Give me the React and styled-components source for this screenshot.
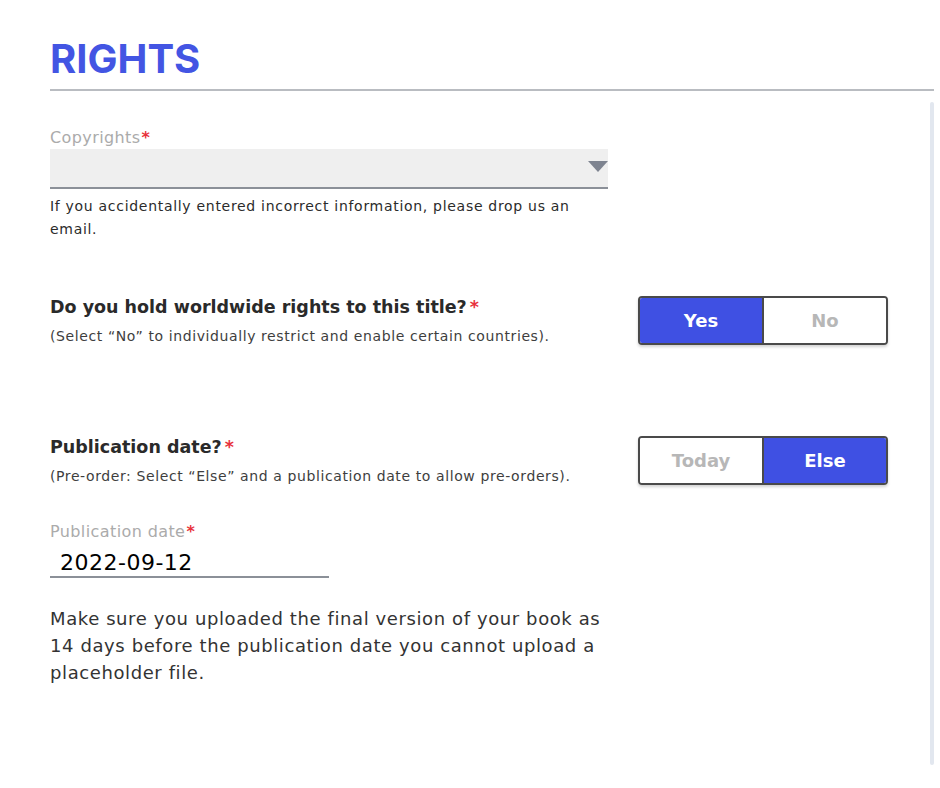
import styled, { createGlobalStyle } from "styled-components";

const GlobalStyle = createGlobalStyle`
   html, body {
      margin: 0;
      padding: 0;
      background: #ffffff;
   }
   body {
      font-family: "DejaVu Sans", "Inter", sans-serif;
   }
`;

const Page = styled.div`
   display: flex;
   width: 940px;
   height: 788px;
   box-sizing: border-box;
   padding: 0 6px 0 50px;
`;

const Content = styled.div`
   flex: 1;
   display: flex;
   flex-direction: column;
`;

const Title = styled.h1`
   margin: 36px 0 0;
   padding-bottom: 7px;
   font-family: "Inter", "DejaVu Sans", sans-serif;
   font-size: 40px;
   line-height: 46px;
   font-weight: 700;
   color: #4355e3;
   border-bottom: 2px solid #b9bcc1;
`;

const Body = styled.div`
   display: flex;
   gap: 22px;
`;

const Form = styled.div`
   flex: 1;
   display: flex;
   flex-direction: column;
   padding-top: 37px;
`;

const Scrollbar = styled.div`
   width: 4px;
   margin-top: 11px;
   height: 663px;
   background: #e2e7ef;
   border-radius: 2px;
`;

const FieldLabel = styled.div`
   font-size: 16px;
   letter-spacing: 0.4px;
   color: #ababab;
   line-height: 20px;
`;

const Star = styled.span`
   color: #e8323c;
   font-weight: 700;
   letter-spacing: 0;
   margin-left: ${(p) => (p.$gap ? "3px" : "1px")};
`;

const Select = styled.div`
   width: 558px;
   height: 34px;
   margin-top: 1px;
   padding-bottom: 4px;
   box-sizing: content-box;
   background: #efefef;
   border-bottom: 2px solid #8b9098;
   display: flex;
   align-items: center;
   justify-content: flex-end;
`;

const Caret = styled.svg`
   width: 20px;
   height: 11px;
   display: block;
`;

const Helper = styled.p`
   margin: 6px 0 0;
   width: 540px;
   font-size: 14px;
   letter-spacing: 0.7px;
   line-height: 23px;
   color: #2b2b2b;
`;

const Question = styled.div`
   display: flex;
   align-items: flex-start;
   justify-content: space-between;
   width: 838px;
   margin-top: ${(p) => p.$top}px;
`;

const QuestionText = styled.div`
   display: flex;
   flex-direction: column;
`;

const QuestionTitle = styled.div`
   font-size: 17.5px;
   font-weight: 700;
   color: #2a2a2a;
   line-height: 22px;
`;

const QuestionSub = styled.div`
   margin-top: 9px;
   font-size: 14px;
   letter-spacing: 0.6px;
   color: #3e3e3e;
   line-height: 18px;
`;

const Toggle = styled.div`
   display: flex;
   width: 250px;
   height: 49px;
   box-sizing: border-box;
   border: 2px solid #4a4a4a;
   border-radius: 4px;
   overflow: hidden;
   box-shadow: 0 2px 3px rgba(0, 0, 0, 0.18);
`;

const ToggleOption = styled.div`
   flex: 1;
   display: flex;
   align-items: center;
   justify-content: center;
   font-size: 18px;
   font-weight: 700;
   color: ${(p) => (p.$active ? "#ffffff" : "#b7b7b7")};
   background: ${(p) => (p.$active ? "#3f50e3" : "#ffffff")};
   & + & {
      border-left: 2px solid #4a4a4a;
   }
`;

const DateField = styled.div`
   margin-top: 37px;
   display: flex;
   flex-direction: column;
`;

const DateValue = styled.div`
   width: 269px;
   padding: 8px 0 0 10px;
   font-size: 22px;
   letter-spacing: 0.5px;
   line-height: 26px;
   color: #000000;
   border-bottom: 2px solid #8b9098;
`;

const Note = styled.p`
   margin: 27px 0 0;
   width: 570px;
   font-size: 18px;
   letter-spacing: 0.6px;
   line-height: 27px;
   color: #333333;
`;

export default function App() {
   return (
      <>
         <GlobalStyle />
         <Page>
            <Content>
               <Title>RIGHTS</Title>
               <Body>
                  <Form>
                     <FieldLabel>
                        Copyrights<Star>*</Star>
                     </FieldLabel>
                     <Select>
                        <Caret viewBox="0 0 20 11">
                           <path d="M0 0 H20 L10 11 Z" fill="#7e8490" />
                        </Caret>
                     </Select>
                     <Helper>
                        If you accidentally entered incorrect information, please drop us an email.
                     </Helper>

                     <Question $top={55}>
                        <QuestionText>
                           <QuestionTitle>
                              Do you hold worldwide rights to this title?<Star $gap>*</Star>
                           </QuestionTitle>
                           <QuestionSub>
                              (Select “No” to individually restrict and enable certain countries).
                           </QuestionSub>
                        </QuestionText>
                        <Toggle>
                           <ToggleOption $active>Yes</ToggleOption>
                           <ToggleOption>No</ToggleOption>
                        </Toggle>
                     </Question>

                     <Question $top={91}>
                        <QuestionText>
                           <QuestionTitle>
                              Publication date?<Star $gap>*</Star>
                           </QuestionTitle>
                           <QuestionSub>
                              (Pre-order: Select “Else” and a publication date to allow pre-orders).
                           </QuestionSub>
                        </QuestionText>
                        <Toggle>
                           <ToggleOption>Today</ToggleOption>
                           <ToggleOption $active>Else</ToggleOption>
                        </Toggle>
                     </Question>

                     <DateField>
                        <FieldLabel>
                           Publication date<Star>*</Star>
                        </FieldLabel>
                        <DateValue>2022-09-12</DateValue>
                     </DateField>

                     <Note>
                        Make sure you uploaded the final version of your book as 14 days before the
                        publication date you cannot upload a placeholder file.
                     </Note>
                  </Form>
                  <Scrollbar />
               </Body>
            </Content>
         </Page>
      </>
   );
}
